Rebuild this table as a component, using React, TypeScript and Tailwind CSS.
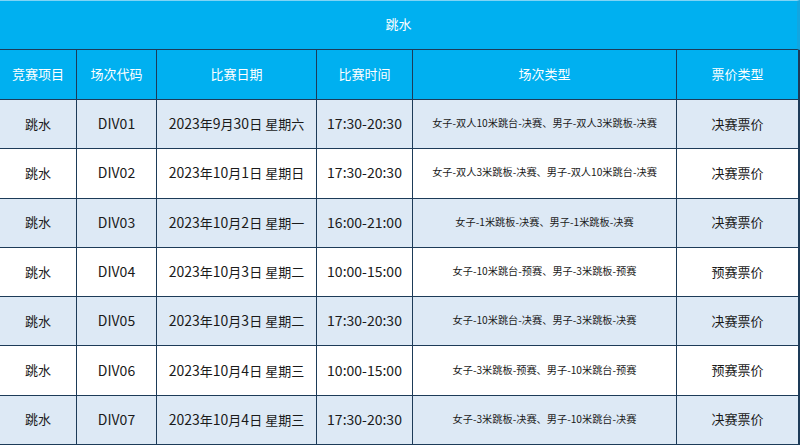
import React from "react";

const rows = [
  ["跳水", "DIV01", "2023年9月30日 星期六", "17:30-20:30", "女子-双人10米跳台-决赛、男子-双人3米跳板-决赛", "决赛票价"],
  ["跳水", "DIV02", "2023年10月1日 星期日", "17:30-20:30", "女子-双人3米跳板-决赛、男子-双人10米跳台-决赛", "决赛票价"],
  ["跳水", "DIV03", "2023年10月2日 星期一", "16:00-21:00", "女子-1米跳板-决赛、男子-1米跳板-决赛", "决赛票价"],
  ["跳水", "DIV04", "2023年10月3日 星期二", "10:00-15:00", "女子-10米跳台-预赛、男子-3米跳板-预赛", "预赛票价"],
  ["跳水", "DIV05", "2023年10月3日 星期二", "17:30-20:30", "女子-10米跳台-决赛、男子-3米跳板-决赛", "决赛票价"],
  ["跳水", "DIV06", "2023年10月4日 星期三", "10:00-15:00", "女子-3米跳板-预赛、男子-10米跳台-预赛", "预赛票价"],
  ["跳水", "DIV07", "2023年10月4日 星期三", "17:30-20:30", "女子-3米跳板-决赛、男子-10米跳台-决赛", "决赛票价"],
];

const headers = ["竞赛项目", "场次代码", "比赛日期", "比赛时间", "场次类型", "票价类型"];

const cols = "grid grid-cols-[77px_80px_160px_96px_264px_123px]";

function Mixed({ text }: { text: string }) {
  const parts = text.split(/([\x00-\x7f]+)/).filter((p) => p.length > 0);
  return (
    <span>
      {parts.map((p, i) =>
        /^[\x00-\x7f]+$/.test(p) ? (
          <span key={i} className="text-[14px]">
            {p}
          </span>
        ) : (
          <span key={i} className="text-[13px]">
            {p}
          </span>
        )
      )}
    </span>
  );
}

export default function App() {
  return (
    <div
      className="w-[800px] h-[445px] overflow-hidden bg-white"
      style={{ fontFamily: '"Noto Sans CJK SC", "Noto Sans", sans-serif' }}
    >
      <div className="h-[50px] bg-[#00b0f0] border-t border-t-[#7fd4f6] border-b border-b-[#1d3b58] border-r-[3px] border-r-[#12a6e0] flex items-center justify-center text-white text-[13px] pb-[2px]">
        跳水
      </div>
      <div className={`${cols} h-[50px] bg-[#00b0f0] text-white text-[13px]`}>
        {headers.map((h, i) => (
          <div
            key={i}
            className={`flex items-center justify-center border-b border-[#1d3b58] pb-[1px] ${i < 5 ? "border-r" : "border-r-[2px] border-r-[#1d3b58]"}`}
          >
            {h}
          </div>
        ))}
      </div>
      {rows.map((r, ri) => (
        <div
          key={ri}
          className={`${cols} h-[49.3px] text-[#1a1a1a] ${ri % 2 === 0 ? "bg-[#dde9f5]" : "bg-white"}`}
        >
          {r.map((c, ci) => (
            <div
              key={ci}
              className={`flex items-center justify-center border-b border-[#1d3b58] pb-[2px] leading-none ${ci < 5 ? "border-r" : "border-r-[2px] border-r-[#1d3b58]"} ${ci === 4 ? "text-[10.2px]" : "text-[13px]"}`}
            >
              {ci === 4 ? c : <Mixed text={c} />}
            </div>
          ))}
        </div>
      ))}
    </div>
  );
}
